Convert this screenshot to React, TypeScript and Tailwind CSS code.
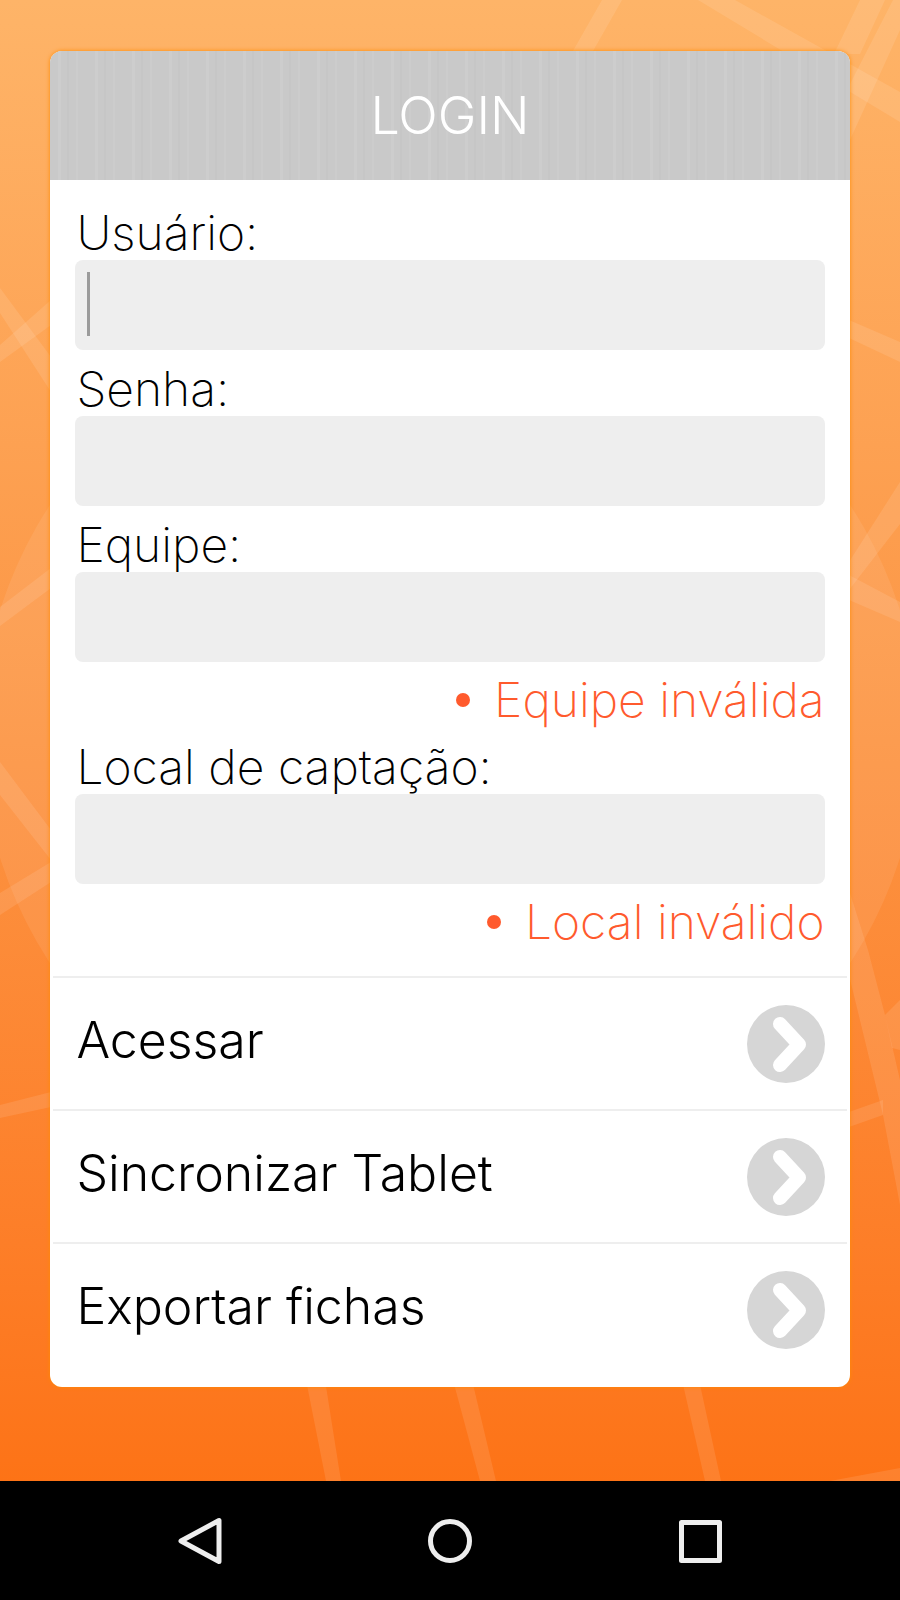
import { useId, type ReactNode } from "react";

type FieldProps = {
  label: string;
  type?: string;
  caret?: boolean;
  error?: string;
};

function Field({ label, type = "text", caret = false, error }: FieldProps) {
  const id = useId();
  return (
    <div>
      <label htmlFor={id} className="block pt-3 pl-px text-5xl/[54px] font-extralight text-black">
        {label}
      </label>
      <div className="relative">
        <input
          id={id}
          type={type}
          aria-invalid={error ? true : undefined}
          aria-describedby={error ? `${id}-error` : undefined}
          className="block h-[90px] w-full rounded-lg bg-[#eeeeee] px-3 text-5xl font-extralight text-black outline-none"
        />
        {caret && <span aria-hidden="true" className="absolute top-3 left-3 h-16 w-[3px] bg-[#9b9b9b]" />}
      </div>
      {error && (
        <ul id={`${id}-error`} className="flex justify-end pt-2.5 text-5xl/14 font-extralight text-[#ff5a2d]">
          <li className="flex items-center gap-6">
            <span aria-hidden="true" className="size-3.5 rounded-full bg-[#ff5a2d]" />
            {error}
          </li>
        </ul>
      )}
    </div>
  );
}

function ActionRow({ children }: { children: ReactNode }) {
  return (
    <button
      type="button"
      className="flex h-[133px] w-full cursor-pointer items-center justify-between border-t-2 border-[#eeeeee] px-[22px] text-left"
    >
      <span className="pb-2 pl-px text-[50px]/14 font-light text-black">{children}</span>
      <svg viewBox="0 0 78 78" className="size-[78px] shrink-0" aria-hidden="true">
        <circle cx="39" cy="39" r="39" fill="#d6d6d6" />
        <path d="M33 19 52 39.500 33 60" fill="none" stroke="#fff" strokeWidth="14" strokeLinecap="round" strokeLinejoin="round" />
      </svg>
    </button>
  );
}

function Backdrop() {
  return (
    <svg
      viewBox="0 0 900 1481"
      preserveAspectRatio="none"
      className="absolute inset-0 h-full w-full"
      aria-hidden="true"
    >
      <ellipse cx="450" cy="734" rx="469" ry="439" fill="#fff" fillOpacity="0.08" />
      <g fill="#fff" fillOpacity="0.1">
        <path d="M602 0H622L593 51H573Z" />
        <path d="M698 0H735L900 92V122Z" />
        <path d="M860 0H885L860 54H834Z" />
        <path d="M893 0H900V30L850 140V84Z" />
        <path d="M0 288 51 357V392L0 313Z" />
        <path d="M0 345 51 300V325L0 362Z" />
        <path d="M0 607 51 568V588L0 626Z" />
        <path d="M0 762 51 830V860L0 795Z" />
        <path d="M0 893 51 862V882L0 915Z" />
        <path d="M0 1105 51 1092V1107L0 1118Z" />
        <path d="M849 320 900 342V362L849 338Z" />
        <path d="M849 562 900 482V524L849 590Z" />
        <path d="M849 575 900 602V622L849 600Z" />
        <path d="M849 890 868 950 885 1015 900 1080V1205L883 1115 849 975Z" />
        <path d="M885 1015 900 1000V1050L892 1048Z" />
        <path d="M849 1112 883 1100V1115L849 1127Z" />
        <path d="M306 1380H325L341 1481H326Z" />
        <path d="M453 1380H472L496 1481H480Z" />
        <path d="M682 1380H699L721 1481H705Z" />
        <path d="M830 1481 900 1468V1481Z" />
      </g>
    </svg>
  );
}

function NavButton({ label, children }: { label: string; children: ReactNode }) {
  return (
    <button type="button" aria-label={label} className="flex flex-1 cursor-pointer items-center justify-center">
      <svg
        viewBox="0 0 48 48"
        className="size-12"
        fill="none"
        stroke="#eeeeee"
        strokeWidth="5"
        strokeLinejoin="round"
        aria-hidden="true"
      >
        {children}
      </svg>
    </button>
  );
}

export default function App() {
  return (
    <div className="flex min-h-screen flex-col bg-black font-['Inter','Liberation_Sans',sans-serif]">
      <main className="relative flex-1 bg-linear-to-b from-[#feb468] via-[#fc9442] to-[#fd7316] px-[5.6%] pt-[51px] pb-[93px]">
        <Backdrop />
        <section className="relative overflow-hidden rounded-xl bg-white pb-3 shadow-[0_0_4px_#ff8a00]">
          <header className="flex h-[129px] items-center justify-center bg-[#c9c9c9] bg-[repeating-linear-gradient(90deg,transparent_0_8px,#cdcdcd_8px_11px,transparent_11px_17px,#c6c6c6_17px_19px,transparent_19px_26px,#cccccc_26px_28px,transparent_28px_37px)]">
            <h1 className="text-[52px]/14 font-light text-white">LOGIN</h1>
          </header>
          <form onSubmit={(e) => e.preventDefault()}>
            <div className="px-[25px] pt-3.5 pb-[26px]">
              <Field label="Usuário:" caret />
              <Field label="Senha:" type="password" />
              <Field label="Equipe:" error="Equipe inválida" />
              <Field label="Local de captação:" error="Local inválido" />
            </div>
            <div className="px-[3px]">
              <ActionRow>Acessar</ActionRow>
              <ActionRow>Sincronizar Tablet</ActionRow>
              <ActionRow>Exportar fichas</ActionRow>
            </div>
          </form>
        </section>
      </main>
      <nav aria-label="Sistema" className="flex h-[119px] px-[8.3%]">
        <NavButton label="Voltar">
          <path d="M5 24 43 3.500V44.500Z" />
        </NavButton>
        <NavButton label="Início">
          <circle cx="24" cy="24" r="19.500" />
        </NavButton>
        <NavButton label="Recentes">
          <rect x="5.500" y="5.500" width="38" height="38" />
        </NavButton>
      </nav>
    </div>
  );
}
